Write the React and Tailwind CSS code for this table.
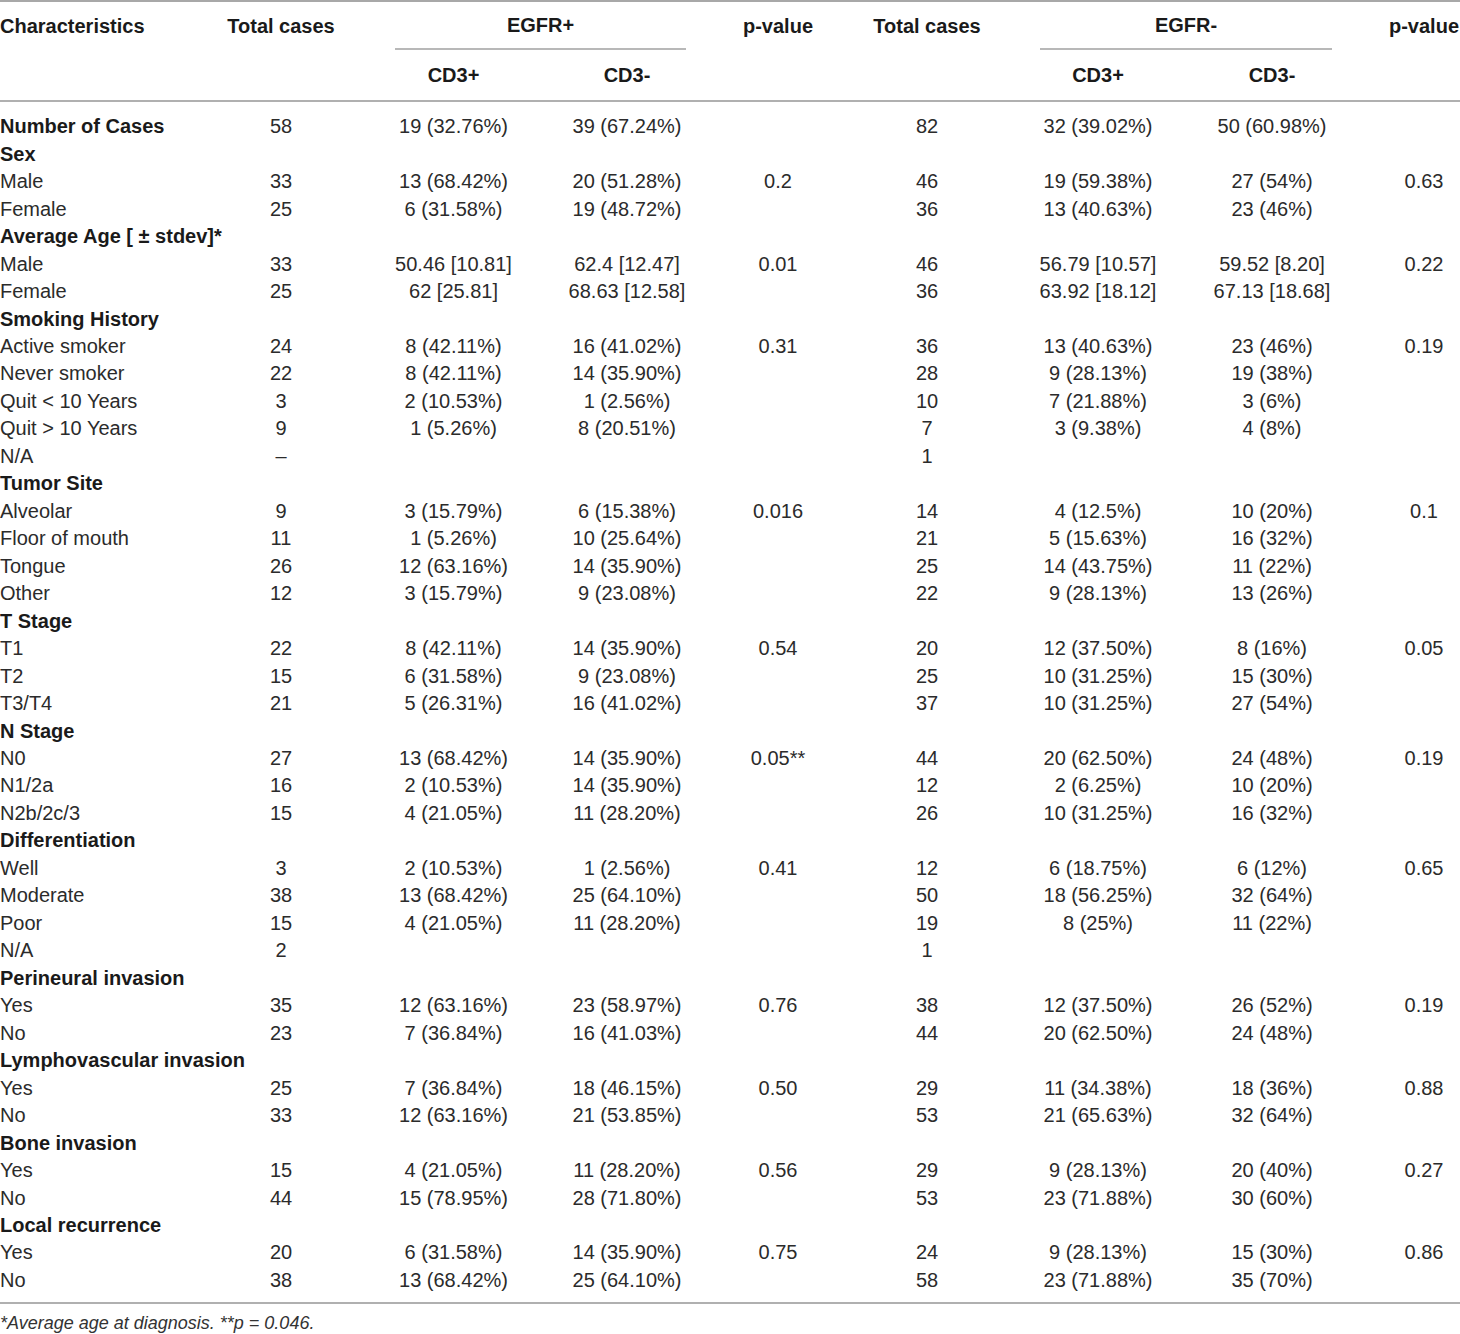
const cols = "grid grid-cols-[195px_172px_173px_174px_128px_170px_172px_176px_100px]";

const rows = [
  ["Number of Cases", "58", "19 (32.76%)", "39 (67.24%)", "", "82", "32 (39.02%)", "50 (60.98%)", "", true],
  ["Sex"],
  ["Male", "33", "13 (68.42%)", "20 (51.28%)", "0.2", "46", "19 (59.38%)", "27 (54%)", "0.63"],
  ["Female", "25", "6 (31.58%)", "19 (48.72%)", "", "36", "13 (40.63%)", "23 (46%)", ""],
  ["Average Age [ ± stdev]*"],
  ["Male", "33", "50.46 [10.81]", "62.4 [12.47]", "0.01", "46", "56.79 [10.57]", "59.52 [8.20]", "0.22"],
  ["Female", "25", "62 [25.81]", "68.63 [12.58]", "", "36", "63.92 [18.12]", "67.13 [18.68]", ""],
  ["Smoking History"],
  ["Active smoker", "24", "8 (42.11%)", "16 (41.02%)", "0.31", "36", "13 (40.63%)", "23 (46%)", "0.19"],
  ["Never smoker", "22", "8 (42.11%)", "14 (35.90%)", "", "28", "9 (28.13%)", "19 (38%)", ""],
  ["Quit < 10 Years", "3", "2 (10.53%)", "1 (2.56%)", "", "10", "7 (21.88%)", "3 (6%)", ""],
  ["Quit > 10 Years", "9", "1 (5.26%)", "8 (20.51%)", "", "7", "3 (9.38%)", "4 (8%)", ""],
  ["N/A", "–", "", "", "", "1", "", "", ""],
  ["Tumor Site"],
  ["Alveolar", "9", "3 (15.79%)", "6 (15.38%)", "0.016", "14", "4 (12.5%)", "10 (20%)", "0.1"],
  ["Floor of mouth", "11", "1 (5.26%)", "10 (25.64%)", "", "21", "5 (15.63%)", "16 (32%)", ""],
  ["Tongue", "26", "12 (63.16%)", "14 (35.90%)", "", "25", "14 (43.75%)", "11 (22%)", ""],
  ["Other", "12", "3 (15.79%)", "9 (23.08%)", "", "22", "9 (28.13%)", "13 (26%)", ""],
  ["T Stage"],
  ["T1", "22", "8 (42.11%)", "14 (35.90%)", "0.54", "20", "12 (37.50%)", "8 (16%)", "0.05"],
  ["T2", "15", "6 (31.58%)", "9 (23.08%)", "", "25", "10 (31.25%)", "15 (30%)", ""],
  ["T3/T4", "21", "5 (26.31%)", "16 (41.02%)", "", "37", "10 (31.25%)", "27 (54%)", ""],
  ["N Stage"],
  ["N0", "27", "13 (68.42%)", "14 (35.90%)", "0.05**", "44", "20 (62.50%)", "24 (48%)", "0.19"],
  ["N1/2a", "16", "2 (10.53%)", "14 (35.90%)", "", "12", "2 (6.25%)", "10 (20%)", ""],
  ["N2b/2c/3", "15", "4 (21.05%)", "11 (28.20%)", "", "26", "10 (31.25%)", "16 (32%)", ""],
  ["Differentiation"],
  ["Well", "3", "2 (10.53%)", "1 (2.56%)", "0.41", "12", "6 (18.75%)", "6 (12%)", "0.65"],
  ["Moderate", "38", "13 (68.42%)", "25 (64.10%)", "", "50", "18 (56.25%)", "32 (64%)", ""],
  ["Poor", "15", "4 (21.05%)", "11 (28.20%)", "", "19", "8 (25%)", "11 (22%)", ""],
  ["N/A", "2", "", "", "", "1", "", "", ""],
  ["Perineural invasion"],
  ["Yes", "35", "12 (63.16%)", "23 (58.97%)", "0.76", "38", "12 (37.50%)", "26 (52%)", "0.19"],
  ["No", "23", "7 (36.84%)", "16 (41.03%)", "", "44", "20 (62.50%)", "24 (48%)", ""],
  ["Lymphovascular invasion"],
  ["Yes", "25", "7 (36.84%)", "18 (46.15%)", "0.50", "29", "11 (34.38%)", "18 (36%)", "0.88"],
  ["No", "33", "12 (63.16%)", "21 (53.85%)", "", "53", "21 (65.63%)", "32 (64%)", ""],
  ["Bone invasion"],
  ["Yes", "15", "4 (21.05%)", "11 (28.20%)", "0.56", "29", "9 (28.13%)", "20 (40%)", "0.27"],
  ["No", "44", "15 (78.95%)", "28 (71.80%)", "", "53", "23 (71.88%)", "30 (60%)", ""],
  ["Local recurrence"],
  ["Yes", "20", "6 (31.58%)", "14 (35.90%)", "0.75", "24", "9 (28.13%)", "15 (30%)", "0.86"],
  ["No", "38", "13 (68.42%)", "25 (64.10%)", "", "58", "23 (71.88%)", "35 (70%)", ""],
];

function Row({ r }) {
  const [label, ...rest] = r;
  const bold = r.length === 1 || r[9] === true;
  const vals = rest.slice(0, 8);
  return (
    <div className={`${cols} h-[27.48px] items-center`}>
      <div className={`whitespace-nowrap ${bold ? "font-bold text-[#1a1a1a]" : ""}`}>{label}</div>
      {vals.map((v, i) => (
        <div key={i} className={`whitespace-nowrap text-center ${i === 7 ? "pl-[28px]" : ""}`}>
          {v}
        </div>
      ))}
    </div>
  );
}

export default function App() {
  return (
    <div className="w-[1460px] bg-white text-[20px] leading-[23px] text-[#2b2b2b] font-['Liberation_Sans',Arial,sans-serif]">
      <div className="border-t-2 border-[#a8a8a8]">
        <div className={`${cols} grid-rows-[48px_50px] font-bold text-[#1a1a1a] border-b-2 border-[#b0b0b0]`}>
          <div className="row-span-2 h-[48px] flex items-center whitespace-nowrap">Characteristics</div>
          <div className="row-span-2 h-[48px] flex items-center justify-center whitespace-nowrap">Total cases</div>
          <div className="col-span-2 mx-[28px] flex items-center justify-center border-b-2 border-[#b8b8b8]">EGFR+</div>
          <div className="row-span-2 h-[48px] flex items-center justify-center">p-value</div>
          <div className="row-span-2 h-[48px] flex items-center justify-center whitespace-nowrap">Total cases</div>
          <div className="col-span-2 mx-[28px] flex items-center justify-center border-b-2 border-[#b8b8b8]">EGFR-</div>
          <div className="row-span-2 h-[48px] pl-[28px] flex items-center justify-center">p-value</div>
          <div className="flex items-center justify-center">CD3+</div>
          <div className="flex items-center justify-center">CD3-</div>
          <div className="flex items-center justify-center">CD3+</div>
          <div className="flex items-center justify-center">CD3-</div>
        </div>
        <div className="pt-[11px] pb-[8px] border-b-2 border-[#b0b0b0]">
          {rows.map((r, i) => (
            <Row key={i} r={r} />
          ))}
        </div>
        <div className="pt-[8px] text-[18px] italic text-[#333]">*Average age at diagnosis. **p = 0.046.</div>
      </div>
    </div>
  );
}
